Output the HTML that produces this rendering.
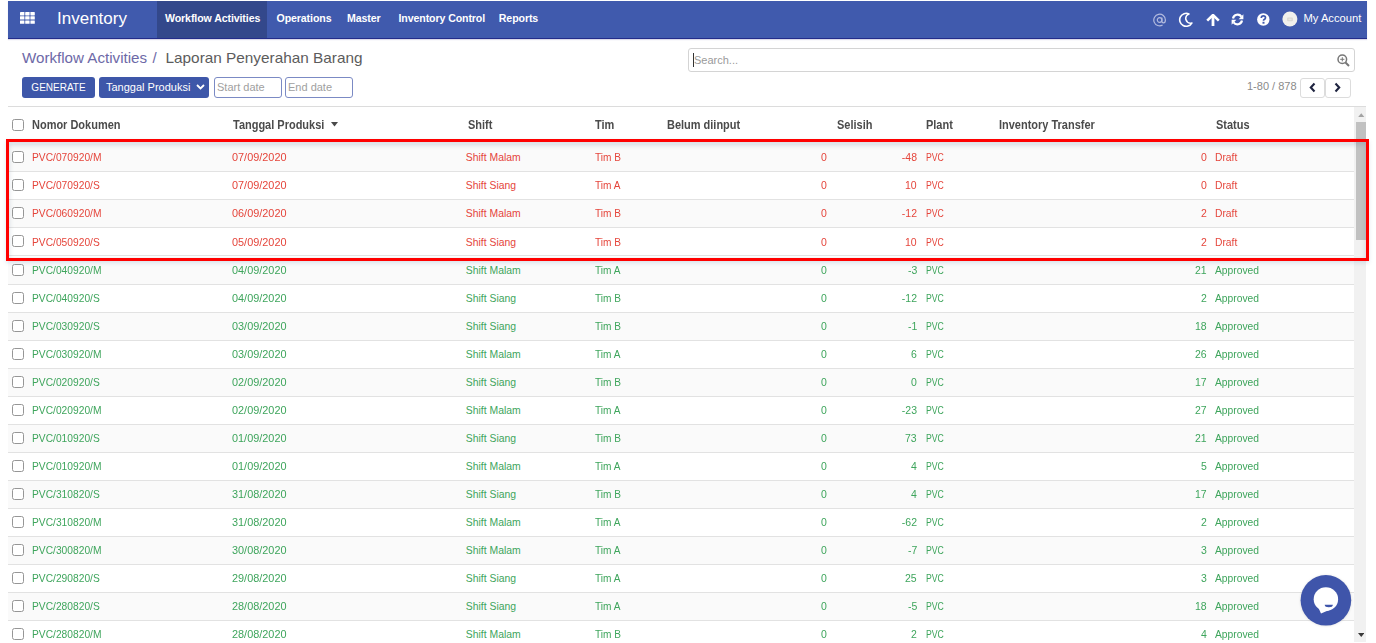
<!DOCTYPE html><html><head><meta charset="utf-8"><style>
*{box-sizing:border-box;margin:0;padding:0}
html,body{width:1376px;height:643px;overflow:hidden;background:#fff;font-family:"Liberation Sans",sans-serif;position:relative}
.a{position:absolute;white-space:nowrap}
#nav{position:absolute;left:8px;top:1px;width:1359px;height:38px;background:#405aad;border-bottom:1px solid #232c8a;box-shadow:0 1px 1px rgba(60,50,140,.18)}
#act{position:absolute;left:149px;top:0;width:110px;height:37px;background:#33488b}
.mi{position:absolute;top:11px;color:#fff;font-size:10.6px;font-weight:bold;line-height:13px;letter-spacing:-0.1px}
.bc{font-size:15px;line-height:17px}
.btn{position:absolute;top:76.6px;height:21px;background:#3e57a9;border-radius:3px;color:#fff;font-size:11px;line-height:20px}
.inp{position:absolute;top:76.5px;height:21.5px;border:1px solid #7b8ac4;border-radius:3px;color:#a0a0a0;font-size:11px;line-height:19px;padding-left:2px}
.th{position:absolute;top:118.5px;font-size:12px;font-weight:bold;color:#4b4b4b;line-height:13px;transform:scaleX(0.915);transform-origin:left}
.row{position:absolute;left:8px;width:1346px;height:28px;border-bottom:1px solid #e2e2e2}
.odd{background:#fafafa}
.cb{position:absolute;left:4px;top:7px;width:12px;height:12px;border:1px solid #969696;border-radius:2.5px;background:#fff}
.td{position:absolute;line-height:12px}
.r{color:#e5453b}
.g{color:#3ea55c}
</style></head><body>
<div id="nav"><div id="act"></div>
<svg class="a" style="left:12px;top:11px" width="15" height="12" viewBox="0 0 15 12"><rect x="0" y="0" width="4.4" height="3.4" rx="0.4" fill="#fff"/><rect x="0" y="4.2" width="4.4" height="3.4" rx="0.4" fill="#fff"/><rect x="0" y="8.4" width="4.4" height="3.4" rx="0.4" fill="#fff"/><rect x="5.2" y="0" width="4.4" height="3.4" rx="0.4" fill="#fff"/><rect x="5.2" y="4.2" width="4.4" height="3.4" rx="0.4" fill="#fff"/><rect x="5.2" y="8.4" width="4.4" height="3.4" rx="0.4" fill="#fff"/><rect x="10.4" y="0" width="4.4" height="3.4" rx="0.4" fill="#fff"/><rect x="10.4" y="4.2" width="4.4" height="3.4" rx="0.4" fill="#fff"/><rect x="10.4" y="8.4" width="4.4" height="3.4" rx="0.4" fill="#fff"/></svg>
<div class="a" style="left:49px;top:8px;color:#fff;font-size:17px;line-height:20px">Inventory</div>
<div class="mi" style="left:157px">Workflow Activities</div>
<div class="mi" style="left:268.5px">Operations</div>
<div class="mi" style="left:339px">Master</div>
<div class="mi" style="left:390.5px">Inventory Control</div>
<div class="mi" style="left:490.8px">Reports</div>
<svg class="a" style="left:1144.8px;top:11.5px" width="14" height="14" viewBox="0 0 14 14"><circle cx="6.6" cy="7" r="2.3" stroke="#b3bbdf" stroke-width="1.2" fill="none"/><path d="M8.9 4.4 V8.3 Q8.9 9.9 10.4 9.9 Q12.4 9.9 12.4 7 A5.8 5.8 0 1 0 9.6 12" stroke="#b3bbdf" stroke-width="1.2" fill="none"/></svg>
<svg class="a" style="left:1169.5px;top:11px" width="16" height="16" viewBox="0 0 16 16"><path d="M10.95 1.9 A6.5 6.5 0 1 0 13.83 11.05 A4.8 4.8 0 0 1 10.95 1.9 Z" stroke="#fff" stroke-width="1.6" fill="none" stroke-linejoin="round"/></svg>
<svg class="a" style="left:1197.5px;top:12.5px" width="14" height="13" viewBox="0 0 14 13"><path d="M1.2 6.6 L7 1 L12.8 6.6" stroke="#fff" stroke-width="2.6" fill="none" stroke-linejoin="miter"/><path d="M7 2.5 V12" stroke="#fff" stroke-width="2.8"/></svg>
<svg class="a" style="left:1223.3px;top:12px" width="13" height="13" viewBox="0 0 13 13"><path d="M2 5.4 A4.7 4.7 0 0 1 10.4 3.6" stroke="#fff" stroke-width="2.2" fill="none"/><path d="M12.4 1.2 V6.2 H7.6Z" fill="#fff"/><path d="M11 7.6 A4.7 4.7 0 0 1 2.6 9.4" stroke="#fff" stroke-width="2.2" fill="none"/><path d="M0.6 11.8 V6.8 H5.4Z" fill="#fff"/></svg>
<svg class="a" style="left:1248.5px;top:11.5px" width="13" height="13" viewBox="0 0 13 13"><circle cx="6.3" cy="6.5" r="6.2" fill="#fff"/><path d="M4.3 5 Q4.3 2.9 6.4 2.9 Q8.5 2.9 8.5 4.7 Q8.5 5.8 7.2 6.5 Q6.5 6.9 6.5 7.8" stroke="#405aad" stroke-width="1.7" fill="none"/><rect x="5.5" y="8.8" width="2" height="1.9" fill="#405aad"/></svg>
<svg class="a" style="left:1273.5px;top:10px" width="16" height="16" viewBox="0 0 16 16"><circle cx="7.9" cy="8" r="7.5" fill="#f1f0ec"/><rect x="5.2" y="6.6" width="5.6" height="3.6" rx="0.8" fill="#d9d7d2"/><rect x="6.4" y="7.6" width="3.2" height="1.6" fill="#e9e8e4"/></svg>
<div class="a" style="left:1295.5px;top:11px;color:#fff;font-size:11.2px;line-height:13px">My Account</div>
</div>
<div class="a bc" style="left:22px;top:49px;color:#6d69a7;font-size:15.15px">Workflow Activities</div>
<div class="a bc" style="left:152.5px;top:49px;color:#6d69a7">/</div>
<div class="a bc" style="left:165.5px;top:49px;color:#5c5c5c;font-size:15.35px">Laporan Penyerahan Barang</div>
<div class="btn" style="left:22px;width:73px;text-align:center;font-size:10px;line-height:22px">GENERATE</div>
<div class="btn" style="left:99px;width:110px;padding-left:7px">Tanggal Produksi<svg style="position:absolute;left:97px;top:7px" width="9" height="6" viewBox="0 0 9 6"><path d="M1 1 L4.5 4.5 L8 1" stroke="#fff" stroke-width="1.8" fill="none"/></svg></div>
<div class="inp" style="left:214px;width:68px">Start date</div>
<div class="inp" style="left:285px;width:68px">End date</div>
<div class="a" style="left:688px;top:48px;width:666.5px;height:23.5px;border:1px solid #d4d4d4;border-radius:3px;background:#fff"></div>
<div class="a" style="left:693px;top:53px;width:1px;height:14px;background:#333"></div>
<div class="a" style="left:694px;top:54px;font-size:11px;line-height:13px;color:#9a9a9a">Search...</div>
<svg class="a" style="left:1337px;top:54px" width="13" height="13" viewBox="0 0 13 13"><circle cx="5.3" cy="5.3" r="4.3" stroke="#777" stroke-width="1.5" fill="none"/><path d="M8.5 8.5 L12 12" stroke="#777" stroke-width="2"/><path d="M5.3 3.2 V7.4 M3.2 5.3 H7.4" stroke="#777" stroke-width="1"/></svg>
<div class="a" style="left:1247px;top:80px;font-size:11px;line-height:13px;color:#8a8a8a">1-80 / 878</div>
<div class="a" style="left:1299.5px;top:77.5px;width:25px;height:20.5px;border:1px solid #dcdcdc;border-radius:3px;background:#fff"></div>
<div class="a" style="left:1324.5px;top:77.5px;width:26px;height:20.5px;border:1px solid #dcdcdc;border-radius:3px;background:#fff"></div>
<svg class="a" style="left:1309px;top:82px" width="7" height="11" viewBox="0 0 7 11"><path d="M5.5 1.5 L1.8 5.5 L5.5 9.5" stroke="#1f2440" stroke-width="2.1" fill="none"/></svg>
<svg class="a" style="left:1334px;top:82px" width="7" height="11" viewBox="0 0 7 11"><path d="M1.5 1.5 L5.2 5.5 L1.5 9.5" stroke="#1f2440" stroke-width="2.1" fill="none"/></svg>
<div class="a" style="left:8px;top:106px;width:1358px;height:1px;background:#dcdcdc"></div>
<div class="cb" style="left:12px;top:119px"></div>
<div class="th" style="left:32px">Nomor Dokumen</div>
<div class="th" style="left:232.5px">Tanggal Produksi</div>
<div class="th" style="left:467.6px">Shift</div>
<div class="th" style="left:595px">Tim</div>
<div class="th" style="left:667px">Belum diinput</div>
<div class="th" style="left:836.5px">Selisih</div>
<div class="th" style="left:926px">Plant</div>
<div class="th" style="left:998.6px">Inventory Transfer</div>
<div class="th" style="left:1216px">Status</div>
<svg class="a" style="left:331px;top:122px" width="7" height="5" viewBox="0 0 7 5"><path d="M0 0 H7 L3.5 4.5Z" fill="#4a4a4a"/></svg>
<div class="row odd r" style="top:144.3px"><div class="cb"></div>
<div class="td" style="left:24.2px;top:8.1px;font-size:10.4px;transform:scaleX(0.9855769230769229);transform-origin:left">PVC/070920/M</div>
<div class="td" style="left:223.5px;top:8.1px;font-size:10.4px;transform:scaleX(1.0480769230769231);transform-origin:left">07/09/2020</div>
<div class="td" style="left:457.8px;top:8.1px;font-size:10.4px;transform:scaleX(1.0);transform-origin:left">Shift Malam</div>
<div class="td" style="left:587px;top:8.1px;font-size:10.4px;transform:scaleX(0.971153846153846);transform-origin:left">Tim B</div>
<div class="td" style="right:527.2px;top:8.1px;font-size:10.4px;transform:scaleX(1.0096153846153846);transform-origin:right">0</div>
<div class="td" style="right:437px;top:8.1px;font-size:10.4px;transform:scaleX(1.0096153846153846);transform-origin:right">-48</div>
<div class="td" style="left:917.8px;top:8.1px;font-size:10.4px;transform:scaleX(0.8365384615384615);transform-origin:left">PVC</div>
<div class="td" style="right:147px;top:8.1px;font-size:10.4px;transform:scaleX(1.0096153846153846);transform-origin:right">0</div>
<div class="td" style="left:1206.7px;top:8.1px;font-size:10.4px;transform:scaleX(0.9903846153846153);transform-origin:left">Draft</div>
</div>
<div class="row r" style="top:172.35px"><div class="cb"></div>
<div class="td" style="left:24.2px;top:8.1px;font-size:10.4px;transform:scaleX(0.9855769230769229);transform-origin:left">PVC/070920/S</div>
<div class="td" style="left:223.5px;top:8.1px;font-size:10.4px;transform:scaleX(1.0480769230769231);transform-origin:left">07/09/2020</div>
<div class="td" style="left:457.8px;top:8.1px;font-size:10.4px;transform:scaleX(1.0);transform-origin:left">Shift Siang</div>
<div class="td" style="left:587px;top:8.1px;font-size:10.4px;transform:scaleX(0.971153846153846);transform-origin:left">Tim A</div>
<div class="td" style="right:527.2px;top:8.1px;font-size:10.4px;transform:scaleX(1.0096153846153846);transform-origin:right">0</div>
<div class="td" style="right:437px;top:8.1px;font-size:10.4px;transform:scaleX(1.0096153846153846);transform-origin:right">10</div>
<div class="td" style="left:917.8px;top:8.1px;font-size:10.4px;transform:scaleX(0.8365384615384615);transform-origin:left">PVC</div>
<div class="td" style="right:147px;top:8.1px;font-size:10.4px;transform:scaleX(1.0096153846153846);transform-origin:right">0</div>
<div class="td" style="left:1206.7px;top:8.1px;font-size:10.4px;transform:scaleX(0.9903846153846153);transform-origin:left">Draft</div>
</div>
<div class="row odd r" style="top:200.4px"><div class="cb"></div>
<div class="td" style="left:24.2px;top:8.1px;font-size:10.4px;transform:scaleX(0.9855769230769229);transform-origin:left">PVC/060920/M</div>
<div class="td" style="left:223.5px;top:8.1px;font-size:10.4px;transform:scaleX(1.0480769230769231);transform-origin:left">06/09/2020</div>
<div class="td" style="left:457.8px;top:8.1px;font-size:10.4px;transform:scaleX(1.0);transform-origin:left">Shift Malam</div>
<div class="td" style="left:587px;top:8.1px;font-size:10.4px;transform:scaleX(0.971153846153846);transform-origin:left">Tim B</div>
<div class="td" style="right:527.2px;top:8.1px;font-size:10.4px;transform:scaleX(1.0096153846153846);transform-origin:right">0</div>
<div class="td" style="right:437px;top:8.1px;font-size:10.4px;transform:scaleX(1.0096153846153846);transform-origin:right">-12</div>
<div class="td" style="left:917.8px;top:8.1px;font-size:10.4px;transform:scaleX(0.8365384615384615);transform-origin:left">PVC</div>
<div class="td" style="right:147px;top:8.1px;font-size:10.4px;transform:scaleX(1.0096153846153846);transform-origin:right">2</div>
<div class="td" style="left:1206.7px;top:8.1px;font-size:10.4px;transform:scaleX(0.9903846153846153);transform-origin:left">Draft</div>
</div>
<div class="row r" style="top:228.45px"><div class="cb"></div>
<div class="td" style="left:24.2px;top:8.1px;font-size:10.4px;transform:scaleX(0.9855769230769229);transform-origin:left">PVC/050920/S</div>
<div class="td" style="left:223.5px;top:8.1px;font-size:10.4px;transform:scaleX(1.0480769230769231);transform-origin:left">05/09/2020</div>
<div class="td" style="left:457.8px;top:8.1px;font-size:10.4px;transform:scaleX(1.0);transform-origin:left">Shift Siang</div>
<div class="td" style="left:587px;top:8.1px;font-size:10.4px;transform:scaleX(0.971153846153846);transform-origin:left">Tim B</div>
<div class="td" style="right:527.2px;top:8.1px;font-size:10.4px;transform:scaleX(1.0096153846153846);transform-origin:right">0</div>
<div class="td" style="right:437px;top:8.1px;font-size:10.4px;transform:scaleX(1.0096153846153846);transform-origin:right">10</div>
<div class="td" style="left:917.8px;top:8.1px;font-size:10.4px;transform:scaleX(0.8365384615384615);transform-origin:left">PVC</div>
<div class="td" style="right:147px;top:8.1px;font-size:10.4px;transform:scaleX(1.0096153846153846);transform-origin:right">2</div>
<div class="td" style="left:1206.7px;top:8.1px;font-size:10.4px;transform:scaleX(0.9903846153846153);transform-origin:left">Draft</div>
</div>
<div class="row odd g" style="top:256.5px"><div class="cb"></div>
<div class="td" style="left:24.2px;top:8.1px;font-size:10.4px;transform:scaleX(0.9855769230769229);transform-origin:left">PVC/040920/M</div>
<div class="td" style="left:223.5px;top:8.1px;font-size:10.4px;transform:scaleX(1.0480769230769231);transform-origin:left">04/09/2020</div>
<div class="td" style="left:457.8px;top:8.1px;font-size:10.4px;transform:scaleX(1.0);transform-origin:left">Shift Malam</div>
<div class="td" style="left:587px;top:8.1px;font-size:10.4px;transform:scaleX(0.971153846153846);transform-origin:left">Tim A</div>
<div class="td" style="right:527.2px;top:8.1px;font-size:10.4px;transform:scaleX(1.0096153846153846);transform-origin:right">0</div>
<div class="td" style="right:437px;top:8.1px;font-size:10.4px;transform:scaleX(1.0096153846153846);transform-origin:right">-3</div>
<div class="td" style="left:917.8px;top:8.1px;font-size:10.4px;transform:scaleX(0.8365384615384615);transform-origin:left">PVC</div>
<div class="td" style="right:147px;top:8.1px;font-size:10.4px;transform:scaleX(1.0096153846153846);transform-origin:right">21</div>
<div class="td" style="left:1206.7px;top:8.1px;font-size:10.4px;transform:scaleX(0.9903846153846153);transform-origin:left">Approved</div>
</div>
<div class="row g" style="top:284.55px"><div class="cb"></div>
<div class="td" style="left:24.2px;top:8.1px;font-size:10.4px;transform:scaleX(0.9855769230769229);transform-origin:left">PVC/040920/S</div>
<div class="td" style="left:223.5px;top:8.1px;font-size:10.4px;transform:scaleX(1.0480769230769231);transform-origin:left">04/09/2020</div>
<div class="td" style="left:457.8px;top:8.1px;font-size:10.4px;transform:scaleX(1.0);transform-origin:left">Shift Siang</div>
<div class="td" style="left:587px;top:8.1px;font-size:10.4px;transform:scaleX(0.971153846153846);transform-origin:left">Tim B</div>
<div class="td" style="right:527.2px;top:8.1px;font-size:10.4px;transform:scaleX(1.0096153846153846);transform-origin:right">0</div>
<div class="td" style="right:437px;top:8.1px;font-size:10.4px;transform:scaleX(1.0096153846153846);transform-origin:right">-12</div>
<div class="td" style="left:917.8px;top:8.1px;font-size:10.4px;transform:scaleX(0.8365384615384615);transform-origin:left">PVC</div>
<div class="td" style="right:147px;top:8.1px;font-size:10.4px;transform:scaleX(1.0096153846153846);transform-origin:right">2</div>
<div class="td" style="left:1206.7px;top:8.1px;font-size:10.4px;transform:scaleX(0.9903846153846153);transform-origin:left">Approved</div>
</div>
<div class="row odd g" style="top:312.6px"><div class="cb"></div>
<div class="td" style="left:24.2px;top:8.1px;font-size:10.4px;transform:scaleX(0.9855769230769229);transform-origin:left">PVC/030920/S</div>
<div class="td" style="left:223.5px;top:8.1px;font-size:10.4px;transform:scaleX(1.0480769230769231);transform-origin:left">03/09/2020</div>
<div class="td" style="left:457.8px;top:8.1px;font-size:10.4px;transform:scaleX(1.0);transform-origin:left">Shift Siang</div>
<div class="td" style="left:587px;top:8.1px;font-size:10.4px;transform:scaleX(0.971153846153846);transform-origin:left">Tim B</div>
<div class="td" style="right:527.2px;top:8.1px;font-size:10.4px;transform:scaleX(1.0096153846153846);transform-origin:right">0</div>
<div class="td" style="right:437px;top:8.1px;font-size:10.4px;transform:scaleX(1.0096153846153846);transform-origin:right">-1</div>
<div class="td" style="left:917.8px;top:8.1px;font-size:10.4px;transform:scaleX(0.8365384615384615);transform-origin:left">PVC</div>
<div class="td" style="right:147px;top:8.1px;font-size:10.4px;transform:scaleX(1.0096153846153846);transform-origin:right">18</div>
<div class="td" style="left:1206.7px;top:8.1px;font-size:10.4px;transform:scaleX(0.9903846153846153);transform-origin:left">Approved</div>
</div>
<div class="row g" style="top:340.65px"><div class="cb"></div>
<div class="td" style="left:24.2px;top:8.1px;font-size:10.4px;transform:scaleX(0.9855769230769229);transform-origin:left">PVC/030920/M</div>
<div class="td" style="left:223.5px;top:8.1px;font-size:10.4px;transform:scaleX(1.0480769230769231);transform-origin:left">03/09/2020</div>
<div class="td" style="left:457.8px;top:8.1px;font-size:10.4px;transform:scaleX(1.0);transform-origin:left">Shift Malam</div>
<div class="td" style="left:587px;top:8.1px;font-size:10.4px;transform:scaleX(0.971153846153846);transform-origin:left">Tim A</div>
<div class="td" style="right:527.2px;top:8.1px;font-size:10.4px;transform:scaleX(1.0096153846153846);transform-origin:right">0</div>
<div class="td" style="right:437px;top:8.1px;font-size:10.4px;transform:scaleX(1.0096153846153846);transform-origin:right">6</div>
<div class="td" style="left:917.8px;top:8.1px;font-size:10.4px;transform:scaleX(0.8365384615384615);transform-origin:left">PVC</div>
<div class="td" style="right:147px;top:8.1px;font-size:10.4px;transform:scaleX(1.0096153846153846);transform-origin:right">26</div>
<div class="td" style="left:1206.7px;top:8.1px;font-size:10.4px;transform:scaleX(0.9903846153846153);transform-origin:left">Approved</div>
</div>
<div class="row odd g" style="top:368.7px"><div class="cb"></div>
<div class="td" style="left:24.2px;top:8.1px;font-size:10.4px;transform:scaleX(0.9855769230769229);transform-origin:left">PVC/020920/S</div>
<div class="td" style="left:223.5px;top:8.1px;font-size:10.4px;transform:scaleX(1.0480769230769231);transform-origin:left">02/09/2020</div>
<div class="td" style="left:457.8px;top:8.1px;font-size:10.4px;transform:scaleX(1.0);transform-origin:left">Shift Siang</div>
<div class="td" style="left:587px;top:8.1px;font-size:10.4px;transform:scaleX(0.971153846153846);transform-origin:left">Tim B</div>
<div class="td" style="right:527.2px;top:8.1px;font-size:10.4px;transform:scaleX(1.0096153846153846);transform-origin:right">0</div>
<div class="td" style="right:437px;top:8.1px;font-size:10.4px;transform:scaleX(1.0096153846153846);transform-origin:right">0</div>
<div class="td" style="left:917.8px;top:8.1px;font-size:10.4px;transform:scaleX(0.8365384615384615);transform-origin:left">PVC</div>
<div class="td" style="right:147px;top:8.1px;font-size:10.4px;transform:scaleX(1.0096153846153846);transform-origin:right">17</div>
<div class="td" style="left:1206.7px;top:8.1px;font-size:10.4px;transform:scaleX(0.9903846153846153);transform-origin:left">Approved</div>
</div>
<div class="row g" style="top:396.75px"><div class="cb"></div>
<div class="td" style="left:24.2px;top:8.1px;font-size:10.4px;transform:scaleX(0.9855769230769229);transform-origin:left">PVC/020920/M</div>
<div class="td" style="left:223.5px;top:8.1px;font-size:10.4px;transform:scaleX(1.0480769230769231);transform-origin:left">02/09/2020</div>
<div class="td" style="left:457.8px;top:8.1px;font-size:10.4px;transform:scaleX(1.0);transform-origin:left">Shift Malam</div>
<div class="td" style="left:587px;top:8.1px;font-size:10.4px;transform:scaleX(0.971153846153846);transform-origin:left">Tim A</div>
<div class="td" style="right:527.2px;top:8.1px;font-size:10.4px;transform:scaleX(1.0096153846153846);transform-origin:right">0</div>
<div class="td" style="right:437px;top:8.1px;font-size:10.4px;transform:scaleX(1.0096153846153846);transform-origin:right">-23</div>
<div class="td" style="left:917.8px;top:8.1px;font-size:10.4px;transform:scaleX(0.8365384615384615);transform-origin:left">PVC</div>
<div class="td" style="right:147px;top:8.1px;font-size:10.4px;transform:scaleX(1.0096153846153846);transform-origin:right">27</div>
<div class="td" style="left:1206.7px;top:8.1px;font-size:10.4px;transform:scaleX(0.9903846153846153);transform-origin:left">Approved</div>
</div>
<div class="row odd g" style="top:424.8px"><div class="cb"></div>
<div class="td" style="left:24.2px;top:8.1px;font-size:10.4px;transform:scaleX(0.9855769230769229);transform-origin:left">PVC/010920/S</div>
<div class="td" style="left:223.5px;top:8.1px;font-size:10.4px;transform:scaleX(1.0480769230769231);transform-origin:left">01/09/2020</div>
<div class="td" style="left:457.8px;top:8.1px;font-size:10.4px;transform:scaleX(1.0);transform-origin:left">Shift Siang</div>
<div class="td" style="left:587px;top:8.1px;font-size:10.4px;transform:scaleX(0.971153846153846);transform-origin:left">Tim B</div>
<div class="td" style="right:527.2px;top:8.1px;font-size:10.4px;transform:scaleX(1.0096153846153846);transform-origin:right">0</div>
<div class="td" style="right:437px;top:8.1px;font-size:10.4px;transform:scaleX(1.0096153846153846);transform-origin:right">73</div>
<div class="td" style="left:917.8px;top:8.1px;font-size:10.4px;transform:scaleX(0.8365384615384615);transform-origin:left">PVC</div>
<div class="td" style="right:147px;top:8.1px;font-size:10.4px;transform:scaleX(1.0096153846153846);transform-origin:right">21</div>
<div class="td" style="left:1206.7px;top:8.1px;font-size:10.4px;transform:scaleX(0.9903846153846153);transform-origin:left">Approved</div>
</div>
<div class="row g" style="top:452.85px"><div class="cb"></div>
<div class="td" style="left:24.2px;top:8.1px;font-size:10.4px;transform:scaleX(0.9855769230769229);transform-origin:left">PVC/010920/M</div>
<div class="td" style="left:223.5px;top:8.1px;font-size:10.4px;transform:scaleX(1.0480769230769231);transform-origin:left">01/09/2020</div>
<div class="td" style="left:457.8px;top:8.1px;font-size:10.4px;transform:scaleX(1.0);transform-origin:left">Shift Malam</div>
<div class="td" style="left:587px;top:8.1px;font-size:10.4px;transform:scaleX(0.971153846153846);transform-origin:left">Tim A</div>
<div class="td" style="right:527.2px;top:8.1px;font-size:10.4px;transform:scaleX(1.0096153846153846);transform-origin:right">0</div>
<div class="td" style="right:437px;top:8.1px;font-size:10.4px;transform:scaleX(1.0096153846153846);transform-origin:right">4</div>
<div class="td" style="left:917.8px;top:8.1px;font-size:10.4px;transform:scaleX(0.8365384615384615);transform-origin:left">PVC</div>
<div class="td" style="right:147px;top:8.1px;font-size:10.4px;transform:scaleX(1.0096153846153846);transform-origin:right">5</div>
<div class="td" style="left:1206.7px;top:8.1px;font-size:10.4px;transform:scaleX(0.9903846153846153);transform-origin:left">Approved</div>
</div>
<div class="row odd g" style="top:480.9px"><div class="cb"></div>
<div class="td" style="left:24.2px;top:8.1px;font-size:10.4px;transform:scaleX(0.9855769230769229);transform-origin:left">PVC/310820/S</div>
<div class="td" style="left:223.5px;top:8.1px;font-size:10.4px;transform:scaleX(1.0480769230769231);transform-origin:left">31/08/2020</div>
<div class="td" style="left:457.8px;top:8.1px;font-size:10.4px;transform:scaleX(1.0);transform-origin:left">Shift Siang</div>
<div class="td" style="left:587px;top:8.1px;font-size:10.4px;transform:scaleX(0.971153846153846);transform-origin:left">Tim B</div>
<div class="td" style="right:527.2px;top:8.1px;font-size:10.4px;transform:scaleX(1.0096153846153846);transform-origin:right">0</div>
<div class="td" style="right:437px;top:8.1px;font-size:10.4px;transform:scaleX(1.0096153846153846);transform-origin:right">4</div>
<div class="td" style="left:917.8px;top:8.1px;font-size:10.4px;transform:scaleX(0.8365384615384615);transform-origin:left">PVC</div>
<div class="td" style="right:147px;top:8.1px;font-size:10.4px;transform:scaleX(1.0096153846153846);transform-origin:right">17</div>
<div class="td" style="left:1206.7px;top:8.1px;font-size:10.4px;transform:scaleX(0.9903846153846153);transform-origin:left">Approved</div>
</div>
<div class="row g" style="top:508.95px"><div class="cb"></div>
<div class="td" style="left:24.2px;top:8.1px;font-size:10.4px;transform:scaleX(0.9855769230769229);transform-origin:left">PVC/310820/M</div>
<div class="td" style="left:223.5px;top:8.1px;font-size:10.4px;transform:scaleX(1.0480769230769231);transform-origin:left">31/08/2020</div>
<div class="td" style="left:457.8px;top:8.1px;font-size:10.4px;transform:scaleX(1.0);transform-origin:left">Shift Malam</div>
<div class="td" style="left:587px;top:8.1px;font-size:10.4px;transform:scaleX(0.971153846153846);transform-origin:left">Tim A</div>
<div class="td" style="right:527.2px;top:8.1px;font-size:10.4px;transform:scaleX(1.0096153846153846);transform-origin:right">0</div>
<div class="td" style="right:437px;top:8.1px;font-size:10.4px;transform:scaleX(1.0096153846153846);transform-origin:right">-62</div>
<div class="td" style="left:917.8px;top:8.1px;font-size:10.4px;transform:scaleX(0.8365384615384615);transform-origin:left">PVC</div>
<div class="td" style="right:147px;top:8.1px;font-size:10.4px;transform:scaleX(1.0096153846153846);transform-origin:right">2</div>
<div class="td" style="left:1206.7px;top:8.1px;font-size:10.4px;transform:scaleX(0.9903846153846153);transform-origin:left">Approved</div>
</div>
<div class="row odd g" style="top:537.0px"><div class="cb"></div>
<div class="td" style="left:24.2px;top:8.1px;font-size:10.4px;transform:scaleX(0.9855769230769229);transform-origin:left">PVC/300820/M</div>
<div class="td" style="left:223.5px;top:8.1px;font-size:10.4px;transform:scaleX(1.0480769230769231);transform-origin:left">30/08/2020</div>
<div class="td" style="left:457.8px;top:8.1px;font-size:10.4px;transform:scaleX(1.0);transform-origin:left">Shift Malam</div>
<div class="td" style="left:587px;top:8.1px;font-size:10.4px;transform:scaleX(0.971153846153846);transform-origin:left">Tim A</div>
<div class="td" style="right:527.2px;top:8.1px;font-size:10.4px;transform:scaleX(1.0096153846153846);transform-origin:right">0</div>
<div class="td" style="right:437px;top:8.1px;font-size:10.4px;transform:scaleX(1.0096153846153846);transform-origin:right">-7</div>
<div class="td" style="left:917.8px;top:8.1px;font-size:10.4px;transform:scaleX(0.8365384615384615);transform-origin:left">PVC</div>
<div class="td" style="right:147px;top:8.1px;font-size:10.4px;transform:scaleX(1.0096153846153846);transform-origin:right">3</div>
<div class="td" style="left:1206.7px;top:8.1px;font-size:10.4px;transform:scaleX(0.9903846153846153);transform-origin:left">Approved</div>
</div>
<div class="row g" style="top:565.05px"><div class="cb"></div>
<div class="td" style="left:24.2px;top:8.1px;font-size:10.4px;transform:scaleX(0.9855769230769229);transform-origin:left">PVC/290820/S</div>
<div class="td" style="left:223.5px;top:8.1px;font-size:10.4px;transform:scaleX(1.0480769230769231);transform-origin:left">29/08/2020</div>
<div class="td" style="left:457.8px;top:8.1px;font-size:10.4px;transform:scaleX(1.0);transform-origin:left">Shift Siang</div>
<div class="td" style="left:587px;top:8.1px;font-size:10.4px;transform:scaleX(0.971153846153846);transform-origin:left">Tim A</div>
<div class="td" style="right:527.2px;top:8.1px;font-size:10.4px;transform:scaleX(1.0096153846153846);transform-origin:right">0</div>
<div class="td" style="right:437px;top:8.1px;font-size:10.4px;transform:scaleX(1.0096153846153846);transform-origin:right">25</div>
<div class="td" style="left:917.8px;top:8.1px;font-size:10.4px;transform:scaleX(0.8365384615384615);transform-origin:left">PVC</div>
<div class="td" style="right:147px;top:8.1px;font-size:10.4px;transform:scaleX(1.0096153846153846);transform-origin:right">3</div>
<div class="td" style="left:1206.7px;top:8.1px;font-size:10.4px;transform:scaleX(0.9903846153846153);transform-origin:left">Approved</div>
</div>
<div class="row odd g" style="top:593.1px"><div class="cb"></div>
<div class="td" style="left:24.2px;top:8.1px;font-size:10.4px;transform:scaleX(0.9855769230769229);transform-origin:left">PVC/280820/S</div>
<div class="td" style="left:223.5px;top:8.1px;font-size:10.4px;transform:scaleX(1.0480769230769231);transform-origin:left">28/08/2020</div>
<div class="td" style="left:457.8px;top:8.1px;font-size:10.4px;transform:scaleX(1.0);transform-origin:left">Shift Siang</div>
<div class="td" style="left:587px;top:8.1px;font-size:10.4px;transform:scaleX(0.971153846153846);transform-origin:left">Tim A</div>
<div class="td" style="right:527.2px;top:8.1px;font-size:10.4px;transform:scaleX(1.0096153846153846);transform-origin:right">0</div>
<div class="td" style="right:437px;top:8.1px;font-size:10.4px;transform:scaleX(1.0096153846153846);transform-origin:right">-5</div>
<div class="td" style="left:917.8px;top:8.1px;font-size:10.4px;transform:scaleX(0.8365384615384615);transform-origin:left">PVC</div>
<div class="td" style="right:147px;top:8.1px;font-size:10.4px;transform:scaleX(1.0096153846153846);transform-origin:right">18</div>
<div class="td" style="left:1206.7px;top:8.1px;font-size:10.4px;transform:scaleX(0.9903846153846153);transform-origin:left">Approved</div>
</div>
<div class="row g" style="top:621.15px"><div class="cb"></div>
<div class="td" style="left:24.2px;top:8.1px;font-size:10.4px;transform:scaleX(0.9855769230769229);transform-origin:left">PVC/280820/M</div>
<div class="td" style="left:223.5px;top:8.1px;font-size:10.4px;transform:scaleX(1.0480769230769231);transform-origin:left">28/08/2020</div>
<div class="td" style="left:457.8px;top:8.1px;font-size:10.4px;transform:scaleX(1.0);transform-origin:left">Shift Malam</div>
<div class="td" style="left:587px;top:8.1px;font-size:10.4px;transform:scaleX(0.971153846153846);transform-origin:left">Tim B</div>
<div class="td" style="right:527.2px;top:8.1px;font-size:10.4px;transform:scaleX(1.0096153846153846);transform-origin:right">0</div>
<div class="td" style="right:437px;top:8.1px;font-size:10.4px;transform:scaleX(1.0096153846153846);transform-origin:right">2</div>
<div class="td" style="left:917.8px;top:8.1px;font-size:10.4px;transform:scaleX(0.8365384615384615);transform-origin:left">PVC</div>
<div class="td" style="right:147px;top:8.1px;font-size:10.4px;transform:scaleX(1.0096153846153846);transform-origin:right">4</div>
<div class="td" style="left:1206.7px;top:8.1px;font-size:10.4px;transform:scaleX(0.9903846153846153);transform-origin:left">Approved</div>
</div>
<div class="a" style="left:1354px;top:107px;width:12px;height:535px;background:#f1f1f1"></div>
<div class="a" style="left:1356px;top:122px;width:10px;height:118px;background:#c1c1c1"></div>
<svg class="a" style="left:1358px;top:112.5px" width="6.5" height="4.2" viewBox="0 0 6.5 4.2"><path d="M0 4.2 L3.25 0.2 L6.5 4.2Z" fill="#a3a3a3"/></svg>
<svg class="a" style="left:1357.8px;top:633px" width="6.5" height="4" viewBox="0 0 6.5 4"><path d="M0 0 L3.25 4 L6.5 0Z" fill="#3a3a3a"/></svg>
<div class="a" style="left:6px;top:139px;width:1363px;height:122px;border:3px solid #ff0000;box-shadow:0 2px 4px rgba(80,130,170,.18),inset 0 3px 5px rgba(90,115,145,.25)"></div>
<svg class="a" style="left:1296px;top:570px" width="60" height="60" viewBox="0 0 60 60"><defs><filter id="sh" x="-20%" y="-20%" width="140%" height="140%"><feGaussianBlur stdDeviation="1.2"/></filter></defs><circle cx="29.9" cy="30.6" r="25.6" fill="rgba(0,0,0,0.10)" filter="url(#sh)"/><circle cx="29.9" cy="30.3" r="25.3" fill="#3f55aa"/><ellipse cx="29.9" cy="29.2" rx="12.2" ry="11.9" fill="#fff"/><path d="M22.5 38 L25 43.6 L35 39.2 Z" fill="#fff"/><path d="M28.7 34.8 A4.1 2.5 0 0 0 36.9 34.8 Z" fill="#3f55aa"/></svg>
</body></html>
